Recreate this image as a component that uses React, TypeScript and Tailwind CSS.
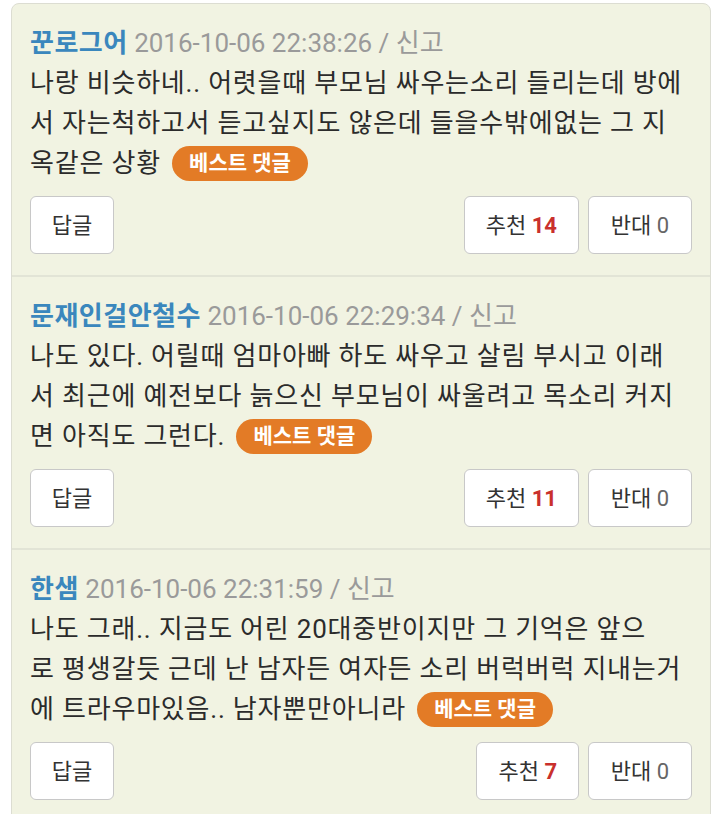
import React from 'react';

type Comment = {
  name: string;
  date: string;
  lines: string[];
  up: number;
  down: number;
};

const comments: Comment[] = [
  {
    name: '꾼로그어',
    date: '2016-10-06 22:38:26',
    lines: [
      '나랑 비슷하네.. 어렷을때 부모님 싸우는소리 들리는데 방에',
      '서 자는척하고서 듣고싶지도 않은데 들을수밖에없는 그 지',
      '옥같은 상황',
    ],
    up: 14,
    down: 0,
  },
  {
    name: '문재인걸안철수',
    date: '2016-10-06 22:29:34',
    lines: [
      '나도 있다. 어릴때 엄마아빠 하도 싸우고 살림 부시고 이래',
      '서 최근에 예전보다 늙으신 부모님이 싸울려고 목소리 커지',
      '면 아직도 그런다.',
    ],
    up: 11,
    down: 0,
  },
  {
    name: '한샘',
    date: '2016-10-06 22:31:59',
    lines: [
      '나도 그래.. 지금도 어린 20대중반이지만 그 기억은 앞으',
      '로 평생갈듯 근데 난 남자든 여자든 소리 버럭버럭 지내는거',
      '에 트라우마있음.. 남자뿐만아니라',
    ],
    up: 7,
    down: 0,
  },
];

const font = { fontFamily: 'Roboto, "Noto Sans CJK KR", sans-serif' };

const CommentItem: React.FC<{ c: Comment; first: boolean }> = ({ c, first }) => {
  return (
    <div className={`px-[18px] pt-[19px] pb-[21px] ${first ? '' : 'border-t-2 border-[#e2e4d6]'}`}>
      <div className="text-[26px] leading-[40px] whitespace-nowrap">
        <span className="font-bold text-[#3a87bd] tracking-[0.5px]">{c.name}</span>{' '}
        <span className="text-[#9a9a9a]">{c.date} / 신고</span>
      </div>
      <p className="text-[26px] leading-[40px] tracking-[0.8px] text-[#2b2b2b] whitespace-nowrap">
        {c.lines.map((l, i) => (
          <React.Fragment key={i}>
            {l}
            {i < c.lines.length - 1 ? <br /> : null}
          </React.Fragment>
        ))}{' '}
        <span className="ml-[4px] inline-block align-middle -mt-[4px] rounded-full bg-[#e37b26] px-[17px] h-[35px] leading-[35px] text-[21px] tracking-normal font-bold text-white">
          베스트 댓글
        </span>
      </p>
      <div className="mt-[13px] flex items-center gap-[9px]">
        <button className="h-[58px] w-[84px] rounded-[6px] border border-[#c8c8c8] bg-white text-[22px] text-[#333]">
          답글
        </button>
        <div className="flex-1" />
        <button className="h-[58px] px-[21px] rounded-[6px] border border-[#c8c8c8] bg-white text-[22px] text-[#333]">
          추천 <span className="font-bold text-[#c9302c]">{c.up}</span>
        </button>
        <button className="h-[58px] w-[104px] rounded-[6px] border border-[#c8c8c8] bg-white text-[22px] text-[#333]">
          반대 <span className="text-[#666]">{c.down}</span>
        </button>
      </div>
    </div>
  );
};

export default function App() {
  return (
    <div className="min-h-screen bg-white pt-[3px] pl-[11px] pr-[9px] overflow-hidden" style={font}>
      <div className="rounded-t-[8px] border border-[#dcddd2] bg-[#f1f3e2]">
        {comments.map((c, i) => (
          <CommentItem key={i} c={c} first={i === 0} />
        ))}
      </div>
    </div>
  );
}
